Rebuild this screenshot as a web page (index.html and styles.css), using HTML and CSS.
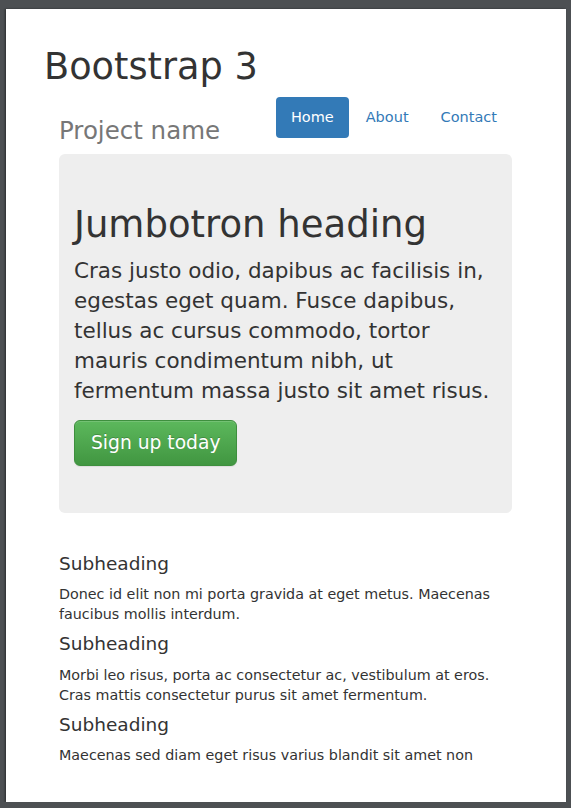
FILE: index.html
```html
<!DOCTYPE html>
<html lang="en">
<head>
<meta charset="utf-8">
<title>Bootstrap 3</title>
<link rel="stylesheet" href="styles.css">
</head>
<body>
<div class="page">
  <div class="container">
    <h1 class="title">Bootstrap 3</h1>
    <div class="inner">
      <div class="header">
        <h3 class="brand">Project name</h3>
        <ul class="nav">
          <li class="active"><a href="#">Home</a></li>
          <li><a href="#">About</a></li>
          <li><a href="#">Contact</a></li>
        </ul>
      </div>
      <div class="jumbotron">
        <h1 class="jumbo-heading">Jumbotron heading</h1>
        <p class="lead">Cras justo odio, dapibus ac facilisis in, egestas eget quam. Fusce dapibus, tellus ac cursus commodo, tortor mauris condimentum nibh, ut fermentum massa justo sit amet risus.</p>
        <div class="cta"><a class="btn" href="#">Sign up today</a></div>
      </div>
      <div class="marketing">
        <h4>Subheading</h4>
        <p>Donec id elit non mi porta gravida at eget metus. Maecenas faucibus mollis interdum.</p>
        <h4>Subheading</h4>
        <p>Morbi leo risus, porta ac consectetur ac, vestibulum at eros. Cras mattis consectetur purus sit amet fermentum.</p>
        <h4>Subheading</h4>
        <p>Maecenas sed diam eget risus varius blandit sit amet non</p>
      </div>
    </div>
  </div>
</div>
</body>
</html>
```
FILE: styles.css
```css
html, body {
  margin: 0;
  padding: 0;
}
body {
  background: #4d5053;
  font-family: "DejaVu Sans", sans-serif;
  color: #333;
  font-size: 14.3px;
  line-height: 20px;
}
.page {
  margin: 9px 5px 0 6px;
  height: 793px;
  background: #fff;
  overflow: hidden;
  box-shadow: -1px 0 2px rgba(0, 0, 0, 0.45);
}
.container {
  padding: 38px 39px 0 38px;
}
.title {
  margin: 0 0 10px;
  font-size: 36.7px;
  font-weight: 500;
  line-height: 1.1;
  color: #333;
}
.inner {
  margin: 0 15px;
}
.header {
  display: flex;
  justify-content: space-between;
  align-items: flex-start;
}
.brand {
  margin: 14px 0 0;
  font-size: 24.5px;
  font-weight: 500;
  line-height: 40px;
  color: #777;
}
.nav {
  list-style: none;
  margin: 0;
  padding: 0;
  display: flex;
}
.nav li {
  margin-left: 2px;
}
.nav a {
  display: block;
  padding: 10px 15px;
  border-radius: 4px;
  color: #337ab7;
  text-decoration: none;
  font-size: 14.5px;
  line-height: 20.5px;
}
.nav .active a {
  background: #337ab7;
  color: #fff;
}
.jumbotron {
  margin-top: 3px;
  margin-bottom: 41px;
  padding: 31px 15px 30px;
  background: #eee;
  border-radius: 6px;
}
.jumbo-heading {
  margin: 20px 0 10px;
  font-size: 37px;
  font-weight: 500;
  line-height: 1.1;
  color: #333;
}
.lead {
  margin: 0 0 14px;
  font-size: 21.5px;
  line-height: 30px;
  font-weight: 400;
}
.cta {
  margin-bottom: 17px;
}
.btn {
  display: inline-block;
  padding: 10px 16px;
  font-size: 18.7px;
  line-height: 24px;
  color: #fff;
  text-decoration: none;
  border: 1px solid #3e8f3e;
  border-radius: 6px;
  background-image: linear-gradient(to bottom, #5cb85c 0%, #419641 100%);
  text-shadow: 0 -1px 0 rgba(0, 0, 0, 0.2);
  box-shadow: inset 0 1px 0 rgba(255, 255, 255, 0.15), 0 1px 1px rgba(0, 0, 0, 0.075);
}
.marketing h4 {
  margin: 10px 0 10px;
  font-size: 18.5px;
  font-weight: 500;
  line-height: 1.1;
  color: #333;
}
.marketing p {
  margin: 0 0 10px;
  font-size: 14.3px;
  line-height: 20px;
}
```
